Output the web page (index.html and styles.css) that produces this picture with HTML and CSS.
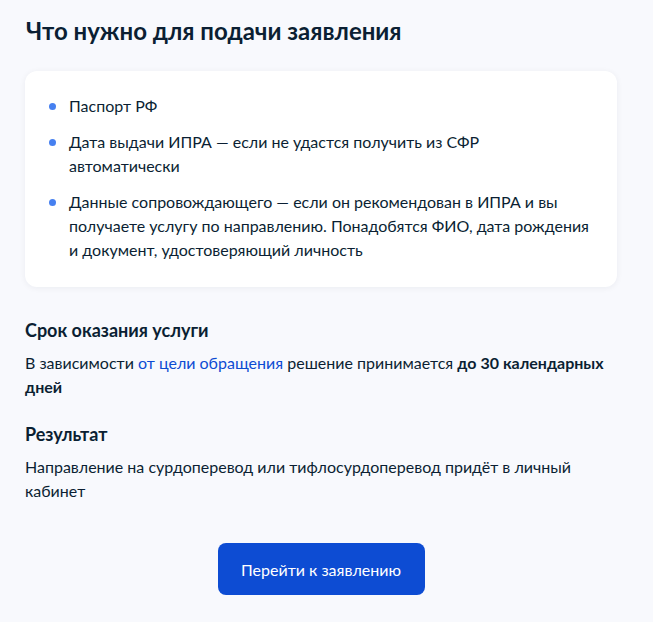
FILE: index.html
```html
<!DOCTYPE html>
<html lang="ru">
<head>
  <meta charset="UTF-8" />
  <title>Что нужно для подачи заявления</title>
  <link rel="stylesheet" href="styles.css">
</head>
<body>
  <div class="page">
    <h1>Что нужно для подачи заявления</h1>

    <div class="card">
      <ul class="docs">
        <li>Паспорт РФ</li>
        <li>Дата выдачи ИПРА — если не удастся получить из СФР автоматически</li>
        <li>Данные сопровождающего — если он рекомендован в ИПРА и вы получаете услугу по направлению. Понадобятся ФИО, дата рождения и документ, удостоверяющий личность</li>
      </ul>
    </div>

    <h2>Срок оказания услуги</h2>
    <p>В зависимости <a href="#">от цели обращения</a> решение принимается <b>до 30 календарных дней</b></p>

    <h2 class="next">Результат</h2>
    <p>Направление на сурдоперевод или тифлосурдоперевод придёт в личный кабинет</p>

    <div class="actions">
      <button>Перейти к заявлению</button>
    </div>
  </div>
</body>
</html>
```

FILE: styles.css
```css
body {
  margin: 0;
  font-family: Lato, 'Noto Sans', sans-serif;
  background-color: #f8f9fd;
  color: #0b1f33;
}

.page {
  width: 592px;
  margin-left: 25px;
  padding-top: 15px;
}

h1 {
  font-size: 24px;
  line-height: 32px;
  font-weight: 700;
  margin: 0 0 24px 1px;
}

.card {
  background-color: #fff;
  border-radius: 12px;
  box-shadow: 0 1px 6px rgba(11, 31, 51, 0.06);
  padding: 23px 24px 25px 44px;
}

.docs {
  list-style: none;
  margin: 0;
  padding: 0;
}

.docs li {
  position: relative;
  font-size: 16px;
  line-height: 24px;
  margin-bottom: 12px;
}

.docs li:last-child {
  margin-bottom: 0;
}

.docs li::before {
  content: "";
  position: absolute;
  left: -20px;
  top: 9px;
  width: 7px;
  height: 7px;
  border-radius: 50%;
  background-color: #4680f0;
}

h2 {
  font-size: 18px;
  line-height: 24px;
  font-weight: 700;
  margin: 31px 0 9px;
}

h2.next {
  margin-top: 23px;
}

p {
  font-size: 16px;
  line-height: 24px;
  margin: 0;
}

a {
  color: #0d4cd3;
  text-decoration: none;
}

.actions {
  display: flex;
  justify-content: center;
  margin-top: 40px;
}

button {
  font-family: inherit;
  font-size: 16px;
  width: 207px;
  height: 52px;
  border: none;
  border-radius: 8px;
  background-color: #0d4cd3;
  color: #fff;
  cursor: pointer;
}
```
